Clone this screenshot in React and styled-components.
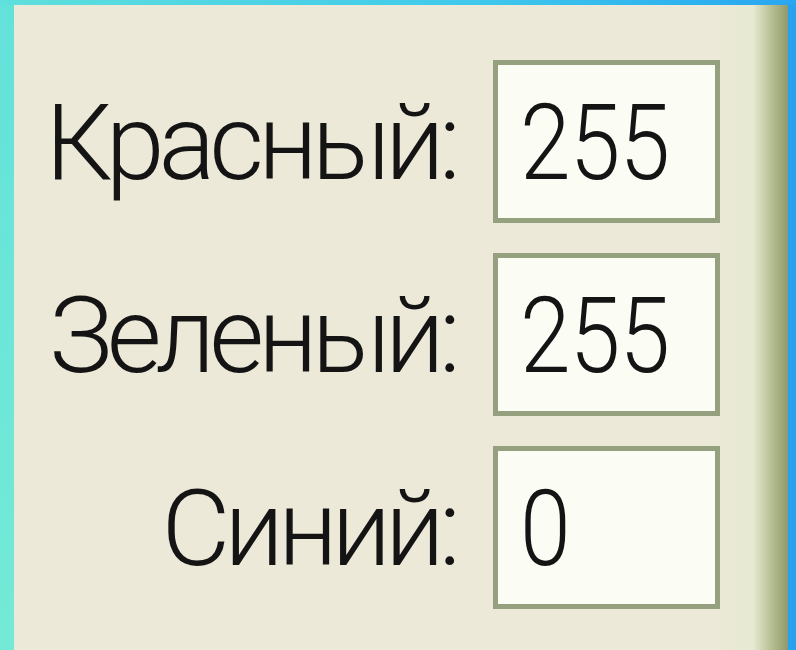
import styled, { createGlobalStyle } from 'styled-components';

const GlobalStyle = createGlobalStyle`
   html, body {
      margin: 0;
      padding: 0;
      width: 100%;
      height: 100%;
      overflow: hidden;
   }
   #root {
      height: 100%;
   }
`;

// outer window frame: turquoise on the left, fading into blue along the top
const Frame = styled.div`
   box-sizing: border-box;
   height: 100%;
   display: flex;
   padding: 5px 8px 0 14px;
   background:
      linear-gradient(90deg, #5fe0dc 0%, #3fc8ec 60%, #28a6f0 100%) top / 100% 5px no-repeat,
      linear-gradient(180deg, #63e2da 0%, #74ead6 100%) left / 14px 100% no-repeat,
      #28a2ee;
`;

const Panel = styled.div`
   flex: 1;
   box-sizing: border-box;
   padding: 55px 68px 0 0;
   background: linear-gradient(
      90deg,
      #ece9d9 0%,
      #ece9d9 90%,
      #e6ead2 95.5%,
      #b4bc90 98%,
      #8f9a6a 100%
   );
   font-family: Roboto, 'Liberation Sans', Arial, sans-serif;
   font-weight: 300;
   color: #141414;
`;

const Fields = styled.div`
   display: grid;
   grid-template-columns: 1fr 227px;
   column-gap: 38px;
   row-gap: 30px;
`;

const Label = styled.label`
   align-self: center;
   text-align: right;
   font-size: 106px;
   line-height: 1;
   letter-spacing: -6px;
   padding: 2px 0 0 0;
   white-space: nowrap;
`;

const ValueBox = styled.div`
   box-sizing: border-box;
   height: 163px;
   display: flex;
   align-items: center;
   padding: 2px 0 0 22px;
   border: 5px solid #94a07e;
   background: #fbfcf4;
   font-size: 106px;
   line-height: 1;
`;

// the dialog font has narrow digits
const Digits = styled.span`
   display: inline-block;
   transform: scaleX(0.86);
   transform-origin: left center;
   letter-spacing: -1px;
`;

const channels = [
   { name: 'Красный:', value: 255 },
   { name: 'Зеленый:', value: 255 },
   { name: 'Синий:', value: 0 },
];

export default function App() {
   return (
      <>
         <GlobalStyle />
         <Frame>
            <Panel>
               <Fields>
                  {channels.map((c) => (
                     <>
                        <Label key={c.name + '-l'}>{c.name}</Label>
                        <ValueBox key={c.name + '-v'}>
                           <Digits>{c.value}</Digits>
                        </ValueBox>
                     </>
                  ))}
               </Fields>
            </Panel>
         </Frame>
      </>
   );
}
